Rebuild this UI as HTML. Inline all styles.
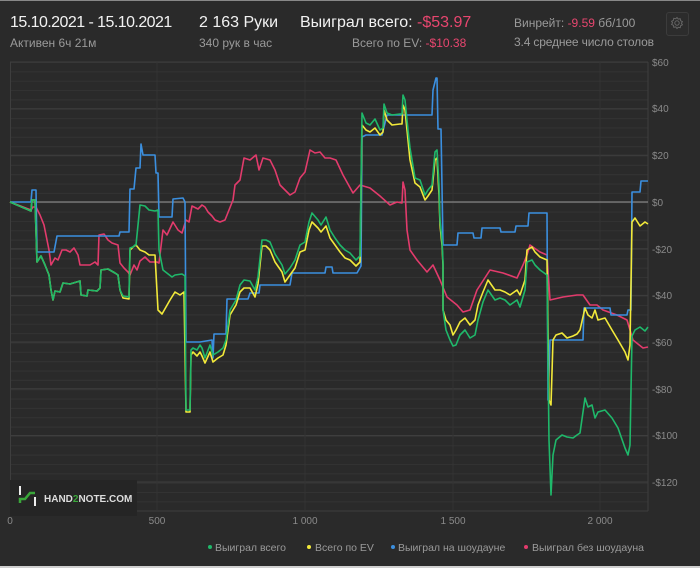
<!DOCTYPE html>
<html><head><meta charset="utf-8"><style>
html,body{margin:0;padding:0}
body{width:700px;height:568px;background:#2a2a2a;position:relative;overflow:hidden;font-family:"Liberation Sans",sans-serif;}
.t{position:absolute;white-space:nowrap}
.w{color:#f2f2f2;font-size:16px}
.g{color:#9a9a9a;font-size:12px}
.r{color:#e8466f}
</style></head><body>
<div style="position:absolute;left:0;top:0;width:700px;height:1px;background:#888"></div>
<div style="position:absolute;left:0;top:566px;width:700px;height:2px;background:#cfcfcf"></div>
<div class="t w" style="left:10px;top:14px;letter-spacing:-0.55px">15.10.2021 - 15.10.2021</div>
<div class="t g" style="left:10px;top:36px">Активен 6ч 21м</div>
<div class="t w" style="left:199px;top:14px">2 163 Руки</div>
<div class="t g" style="left:199px;top:36px">340 рук в час</div>
<div class="t w" style="left:300px;top:14px">Выиграл всего: <span class="r">-$53.97</span></div>
<div class="t g" style="left:352px;top:36px">Всего по EV: <span class="r">-$10.38</span></div>
<div class="t g" style="left:514px;top:16px">Винрейт: <span class="r">-9.59</span> бб/100</div>
<div class="t g" style="left:514px;top:35px;letter-spacing:-0.15px">3.4 среднее число столов</div>
<div style="position:absolute;left:666px;top:12px;width:21px;height:22px;border:1px solid #3c3c3c;border-radius:3px;background:#2c2c2c"></div>
<svg style="position:absolute;left:669px;top:15px" width="16" height="16" viewBox="0 0 16 16"><g fill="none" stroke="#666" stroke-width="1"><circle cx="8" cy="8" r="2.2"/><path d="M8 2.5l1.2 1.6 2-.4.4 2 1.8 1-1 1.5 1 1.6-1.8.9-.4 2-2-.4L8 13.5l-1.2-1.6-2 .4-.4-2-1.8-.9 1-1.6-1-1.5 1.8-1 .4-2 2 .4z"/></g></svg>

<svg style="position:absolute;left:0;top:0" width="700" height="568">
<defs><pattern id="mg" x="0" y="62" width="10" height="9.348" patternUnits="userSpaceOnUse"><line x1="0" y1="0.5" x2="10" y2="0.5" stroke="#333" stroke-width="1"/></pattern></defs>
<rect x="10" y="62" width="638" height="449" fill="url(#mg)"/>
<g stroke="#3e3e3e" stroke-width="1">
<line x1="10" y1="62" x2="648" y2="62"/><line x1="10" y1="108.7" x2="648" y2="108.7"/><line x1="10" y1="155.3" x2="648" y2="155.3"/><line x1="10" y1="248.7" x2="648" y2="248.7"/><line x1="10" y1="295.4" x2="648" y2="295.4"/><line x1="10" y1="342" x2="648" y2="342"/><line x1="10" y1="388.8" x2="648" y2="388.8"/><line x1="10" y1="435.5" x2="648" y2="435.5"/><line x1="10" y1="482" x2="648" y2="482"/><line x1="10" y1="511" x2="648" y2="511"/>
<line x1="10.5" y1="62" x2="10.5" y2="511"/><line x1="157" y1="62" x2="157" y2="511" stroke="#333"/><line x1="305" y1="62" x2="305" y2="511" stroke="#333"/><line x1="453" y1="62" x2="453" y2="511" stroke="#333"/><line x1="600" y1="62" x2="600" y2="511" stroke="#333"/><line x1="648" y1="62" x2="648" y2="511"/>
</g>
<line x1="10" y1="202" x2="648" y2="202" stroke="#9a9a9a" stroke-width="1"/>
<g fill="none" stroke-width="1.6" stroke-linejoin="round">
<polyline stroke="#e23b6c" points="10,202 31,210 33,207 36,207 40,215 44,225 47,240 49,250 51,265 55,258 58,260 62,250 66,250 70,252 74,248 78,255 80,265 85,265 90,265 95,262 98,265 99,235 104,234 108,240 112,243 118,245 120,263 124,268 128,272 130,275 134,265 137,270 140,261 145,257 150,262 157,262 159,263 163,230 167,235 173,222 178,230 182,233 186,220 189,222 192,206 198,209 202,205 205,207 208,212 212,216 215,220 220,222 225,220 229,210 233,200 235,185 240,180 244,158 250,160 256,155 259,170 263,158 270,160 275,170 280,185 285,190 290,195 295,192 300,178 305,172 310,150 315,153 320,152 325,158 330,158 336,160 343,175 353,193 360,185 370,188 380,196 390,205 397,202 402,203 403,182 405,190 407,230 410,250 417,260 427,272 433,265 440,280 447,297 457,305 463,312 470,310 477,290 490,270 503,273 517,278 523,265 527,255 530,245 540,252 547,255 550,300 563,297 577,295 583,295 590,305 597,305 603,310 617,315 627,320 633,340 643,348 648,347"/>
<polyline stroke="#3b8fdf" points="10,202 31,202 32,190 36,190 37,252 54,252 57,236 119,236 120,232 129,232 130,189 134,189 136,168 140,168 141,144 143,155 155,155 156,173 158,173 159,217 172,217 173,199 183,198 185,202 186,342 200,342 212,340 213,358 214,334 226,334 227,299 248,299 250,293 259,293 260,285 290,285 292,273 325,273 326,267 332,267 333,273 357,273 361,266 362,137 366,135 382,135 387,115 432,115 433,90 436,78 437,78 438,129 441,129 443,245 457,245 458,233 473,233 474,238 481,238 482,228 500,228 501,232 515,232 516,226 528,226 529,213 547,213 548,400 550,340 583,340 584,308 610,308 611,315 627,315 628,310 631,310 632,192 640,192 641,181 648,181"/>
<polyline stroke="#f2e93a" points="10,202 31,211 32,200 35,200 37,262 41,256 45,265 49,275 51,290 53,300 55,291 60,292 63,283 70,284 80,281 81,295 87,296 88,290 97,291 100,288 101,270 108,269 115,273 118,275 120,290 123,298 129,299 130,250 133,247 136,245 140,250 145,252 149,255 155,255 158,310 162,314 170,300 175,292 180,295 184,292 186,412 190,412 191,355 193,352 197,356 200,352 202,356 205,363 210,352 213,362 218,358 223,355 226,345 230,315 236,305 240,292 244,288 250,288 255,297 258,284 262,246 266,246 270,250 275,262 282,272 285,282 290,275 295,268 300,252 305,250 309,230 312,222 318,228 321,232 326,226 330,238 335,245 340,252 345,258 350,260 356,266 360,262 362,125 366,130 370,132 375,128 380,135 383,132 384,110 387,120 392,125 400,124 402,124 403,105 405,110 408,140 410,160 415,183 420,187 425,200 428,196 432,190 435,160 437,158 439,195 440,225 442,245 443,265 443,310 446,320 450,325 453,335 456,330 460,322 465,318 470,325 475,320 478,305 483,292 488,280 495,290 500,290 505,292 510,295 517,290 520,295 525,280 527,250 532,247 535,252 540,257 547,260 549,400 551,405 553,340 556,335 562,333 567,338 573,336 577,334 580,330 585,308 588,315 592,318 595,310 598,320 605,318 612,330 618,340 625,352 628,360 630,345 632,222 635,218 640,226 645,222 648,224"/>
<polyline stroke="#1fb86a" points="10,202 31,211 32,200 35,200 37,262 41,256 45,265 49,275 51,290 53,300 55,291 60,292 63,283 70,284 80,281 81,295 87,296 88,290 97,291 100,288 101,270 108,269 115,273 118,275 120,290 123,296 129,297 130,248 133,247 135,245 136,245 140,205 145,206 149,210 155,211 158,210 159,250 163,270 172,277 175,275 182,274 185,276 186,410 190,410 191,350 193,348 197,350 200,345 202,348 205,358 210,345 213,355 218,352 223,348 226,340 230,310 236,300 240,285 244,280 250,281 255,290 258,277 262,240 266,240 270,242 275,254 282,265 285,274 290,268 295,260 300,245 305,242 309,222 312,213 318,220 321,225 326,217 330,230 335,238 340,245 345,250 350,253 356,260 360,256 362,113 366,123 370,125 375,119 380,130 383,128 384,104 387,113 392,115 400,114 402,114 403,95 405,100 408,130 410,148 415,178 420,180 425,195 428,190 432,185 435,152 437,150 439,185 440,220 442,240 443,262 443,310 446,330 450,340 453,346 456,345 460,335 465,330 470,338 475,335 478,320 483,302 488,290 495,300 500,298 505,300 510,305 517,300 520,307 525,290 527,262 532,260 535,265 540,270 547,275 549,440 551,495 553,455 556,440 562,435 567,437 573,438 577,435 580,433 585,398 588,407 592,405 595,418 598,412 605,410 612,418 618,428 625,448 628,455 630,445 632,336 635,330 640,327 645,331 648,327"/>
</g>
<g fill="#8a8a8a" font-size="10" font-family="Liberation Sans, sans-serif">
<text x="652" y="66">$60</text><text x="652" y="112">$40</text><text x="652" y="159">$20</text><text x="652" y="206">$0</text><text x="652" y="253">-$20</text><text x="652" y="299">-$40</text><text x="652" y="346">-$60</text><text x="652" y="393">-$80</text><text x="652" y="439">-$100</text><text x="652" y="486">-$120</text>
<text x="10" y="524" text-anchor="middle">0</text><text x="157" y="524" text-anchor="middle">500</text><text x="305" y="524" text-anchor="middle">1 000</text><text x="453" y="524" text-anchor="middle">1 500</text><text x="600" y="524" text-anchor="middle">2 000</text>
</g>
<rect x="10" y="480" width="127" height="36" fill="#252525"/>
<line x1="20" y1="486" x2="20" y2="495" stroke="#eee" stroke-width="2"/>
<line x1="35" y1="497" x2="35" y2="506" stroke="#eee" stroke-width="2"/>
<path d="M20 503V499h5l5-6h5" fill="none" stroke="#3aa63a" stroke-width="2.5"/>
<text x="44" y="502" fill="#dddddd" font-size="10" font-weight="bold" font-family="Liberation Sans, sans-serif">HAND<tspan fill="#3aa63a">2</tspan>NOTE.COM</text>
<g font-size="10.5" font-family="Liberation Sans, sans-serif" fill="#9a9a9a">
<circle cx="210" cy="547" r="2" fill="#1fb86a"/><text x="215" y="551">Выиграл всего</text>
<circle cx="309" cy="547" r="2" fill="#f2e93a"/><text x="315" y="551">Всего по EV</text>
<circle cx="393" cy="547" r="2" fill="#3b8fdf"/><text x="398" y="551">Выиграл на шоудауне</text>
<circle cx="526" cy="547" r="2" fill="#e23b6c"/><text x="532" y="551">Выиграл без шоудауна</text>
</g>
</svg>
</body></html>
